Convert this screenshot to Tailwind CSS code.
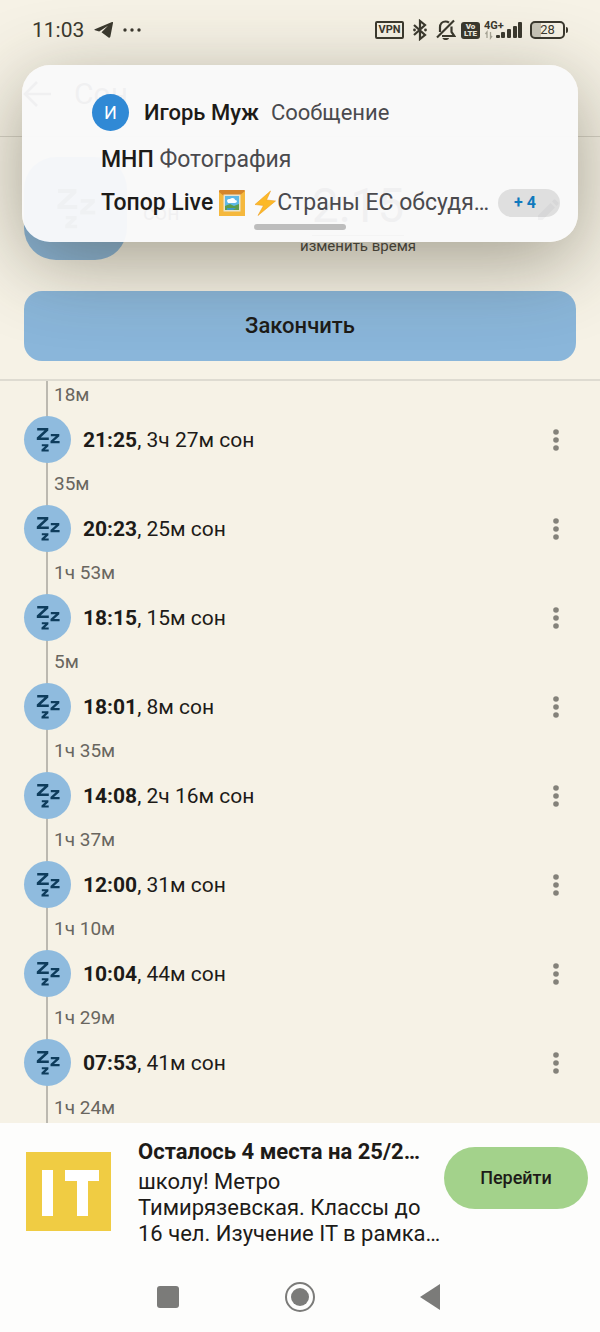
<!DOCTYPE html>
<html lang="ru">
<head>
<meta charset="utf-8">
<meta name="viewport" content="width=device-width, initial-scale=1">
<title>Сон</title>
<script src="https://cdn.jsdelivr.net/npm/@tailwindcss/browser@4"></script>
</head>
<body class="bg-[#f6f2e6] font-['Roboto',sans-serif] text-[#1d1b18]">
<svg class="hidden" aria-hidden="true">
  <symbol id="zzz" viewBox="0 0 24 24">
    <g fill="currentColor">
      <path d="M1.200 0H12.300V2.400L4.700 9.600H12.800V12H.8V9.600L8.500 2.400H1.200z"/>
      <path d="M14.800 6H23.300V8.200L18 13.100H23.600V15.300H14.500V13.100L19.800 8.200H14.800z"/>
      <path d="M5.800 16.200H12.400V18.200L8.900 21.400H12.700V23.500H5.500V21.400L9.100 18.200H5.800z"/>
    </g>
  </symbol>
  <symbol id="dots" viewBox="0 0 8 24">
    <g fill="currentColor"><circle cx="4" cy="4" r="2.800"/><circle cx="4" cy="12" r="2.800"/><circle cx="4" cy="20" r="2.800"/></g>
  </symbol>
</svg>
<div class="relative flex min-h-screen flex-col">

  <div class="flex h-15 items-center justify-between pr-8 pl-8 text-[#3b392f]">
    <div class="flex items-center">
      <span class="text-[21px] leading-6">11:03</span>
      <svg class="ml-2.5 h-4 w-5" viewBox="0 0 20 16"><path fill="currentColor" d="M18 0 L.8 7.200 Q-.2 7.900 1 8.300 L5.200 9.500 L14 3.800 L7.500 10.300 L14.500 15.400 Q16 16.300 16.400 14.600 L19 1 Q19.200 -.3 18 0 Z"/></svg>
      <svg class="ml-2 h-4 w-5" viewBox="0 0 20 16"><g fill="currentColor"><circle cx="3" cy="8" r="1.700"/><circle cx="10" cy="8" r="1.700"/><circle cx="17" cy="8" r="1.700"/></g></svg>
    </div>
    <div class="flex items-center">
      <span class="flex h-[18px] w-[29px] items-center justify-center rounded-xs border-2 border-[#3b392f] text-[11px] leading-3 font-bold">VPN</span>
      <svg class="ml-2 h-[22px] w-4" viewBox="0 0 16 22"><path fill="none" stroke="currentColor" stroke-width="2.200" d="M2 6l11 10-5 4V2l5 4L2 16"/><circle cx="2.500" cy="11" r="1.400" fill="currentColor"/><circle cx="13.500" cy="11" r="1.400" fill="currentColor"/></svg>
      <svg class="ml-2 h-[22px] w-5" viewBox="0 0 20 22"><g fill="none" stroke="currentColor" stroke-width="2.200"><path d="M1 18.500L18 1.500"/><path d="M4 13V8.500C4 4.500 6.500 2.500 9.500 2.500c1.500 0 2.500.4 3.500 1.200M15.500 7.500V13l2.800 4H6"/></g><path fill="currentColor" d="M6.500 19h6.500c-.5 2.800-6 2.800-6.500 0z"/></svg>
      <span class="ml-[5px] flex h-[17px] w-[19px] flex-col items-center justify-center rounded-[3px] bg-[#3b392f] text-[8px] leading-[7px] font-black text-[#f0ede0]"><span>Vo</span><span>LTE</span></span>
      <svg class="ml-1 h-5 w-[38px]" viewBox="0 0 38 20"><text x="0" y="9" font-size="11" font-weight="700" fill="currentColor">4G+</text><path d="M3 18V12l-1.500 2M6.500 12v6l1.500-2" fill="none" stroke="#aaa799" stroke-width="1.300"/><g fill="currentColor"><rect x="12" y="15" width="4" height="3" rx="1"/><rect x="17" y="12" width="4" height="6" rx="1"/><rect x="23" y="9" width="4" height="9" rx="1"/><rect x="29" y="6" width="4" height="12" rx="1"/><rect x="34" y="2" width="4" height="16" rx="1"/></g></svg>
      <span class="ml-2 flex h-[18px] w-[35px] items-center justify-center rounded-[5px] border-2 border-[#3b392f] bg-linear-to-r from-[#c9c6b9] from-30% to-transparent to-30% text-[13px] leading-4">28</span>
      <span class="ml-px h-1.5 w-0.5 rounded-r bg-[#3b392f]"></span>
    </div>
  </div>

  <header class="flex h-[77px] items-center border-b border-[#d6d2c6] pb-2 pl-[22px]">
    <button aria-label="Назад" class="text-[#1d1b18]"><svg class="h-8 w-8" viewBox="0 0 32 32"><path fill="none" stroke="currentColor" stroke-width="2.600" d="M29 16H4M15 4L3 16l12 12"/></svg></button>
    <h1 class="ml-5 text-[30px] leading-10">Сон</h1>
  </header>

  <section class="border-b-2 border-[#dedbd1] px-6 pt-5 pb-[18px]">
    <div class="flex h-[103px]">
      <div class="flex h-[103px] w-[103px] items-center justify-center rounded-[32px] bg-[#8ab5d9] text-[#0e3c5c]"><svg class="h-10 w-10"><use href="#zzz"/></svg></div>
      <span class="mt-9 ml-4 text-[22px] leading-10">сон</span>
      <div class="ml-auto flex w-[118px] flex-col items-center">
        <span class="mt-5 border-b border-[#77756d] text-[48px] leading-[58px]">2:15</span>
        <span class="text-[15px] leading-5 whitespace-nowrap text-[#45433c]">изменить время</span>
      </div>
      <button aria-label="Изменить" class="mr-[15px] ml-[120px] h-[103px]"><svg class="h-6 w-6" viewBox="0 0 24 24"><path fill="currentColor" d="M1 18.500V23h4.500L18 10.500 13.500 6zM21 7.500c.8-.8.800-1.500 0-2.300l-2.300-2.300c-.8-.8-1.500-.8-2.300 0L15 4.500 19.500 9z"/></svg></button>
    </div>
    <button class="mt-[31px] h-[70px] w-full rounded-[18px] bg-[#8ab6da] text-[22px] leading-7 font-medium">Закончить</button>
  </section>

  <main id="log" class="relative flex-1 pr-6 pl-6 before:absolute before:inset-y-0 before:left-[46px] before:w-0.5 before:bg-[#bcb9b0]">
    <div class="h-[35px] pl-[30px] text-[19px] leading-7 text-[#69665f]">18м</div>
  </main>
  <template id="row">
    <div class="relative flex h-[47px] items-center">
      <span class="flex h-[47px] w-[47px] items-center justify-center rounded-full bg-[#8fbbde] text-[#0e3c5c]"><svg class="h-6 w-6"><use href="#zzz"/></svg></span>
      <p class="ml-3 text-[21px] leading-7"><b class="font-bold"></b><span></span></p>
      <button aria-label="Действия" class="ml-auto flex h-10 w-10 items-center justify-center text-[#84827a]"><svg class="h-6 w-2"><use href="#dots"/></svg></button>
    </div>
    <div class="flex h-[42px] items-center pl-[30px] text-[19px] leading-7 text-[#69665f] last:h-[36px] last:items-end"></div>
  </template>

  <aside class="flex h-[127px] bg-[#fdfdfc] pt-3 pr-3 pl-[26px]">
    <svg class="mt-[17px] h-[79px] w-[85px] shrink-0" viewBox="0 0 85 79" role="img" aria-label="IT"><rect width="85" height="79" fill="#f0cc43"/><path fill="#fff" d="M16 18h11v46H16zM39 18h34v11H62v35H51V29H39z"/></svg>
    <div class="ml-[27px] min-w-0 flex-1">
      <h2 class="text-[22px] leading-[34px] font-bold whitespace-nowrap">Осталось 4 места на 25/2…</h2>
      <p class="text-[22px] leading-[26px] whitespace-nowrap">школу! Метро<br>Тимирязевская. Классы до<br>16 чел. Изучение IT в рамка…</p>
    </div>
    <button class="mt-3 ml-2 h-[62px] w-36 shrink-0 rounded-full bg-[#a3d28b] text-[18px] leading-6 font-medium">Перейти</button>
  </aside>

  <nav class="flex h-[82px] items-center justify-center gap-[100px] bg-[#fdfdfc] pt-3 text-[#7b7b79]">
    <button aria-label="Недавние"><svg class="h-8 w-8" viewBox="0 0 32 32"><rect x="5" y="5" width="22" height="22" rx="3" fill="currentColor"/></svg></button>
    <button aria-label="Домой"><svg class="h-8 w-8" viewBox="0 0 32 32"><circle cx="16" cy="16" r="14" fill="none" stroke="currentColor" stroke-width="2"/><circle cx="16" cy="16" r="9" fill="currentColor"/></svg></button>
    <button aria-label="Назад"><svg class="h-8 w-8" viewBox="0 0 32 32"><path fill="currentColor" d="M24 3v26L4 16z"/></svg></button>
  </nav>

  <div class="absolute inset-x-[22px] top-[65px] h-[177px] rounded-[28px] bg-[#f9f9fa]/96 shadow-[0_20px_80px_rgba(60,55,35,0.44)]">
    <div class="mt-[29px] ml-[70px] flex h-[37px] items-center">
      <span class="flex h-[37px] w-[37px] items-center justify-center rounded-full bg-[#3089d5] text-[18px] leading-6 text-white">И</span>
      <span class="ml-[15px] text-[22px] leading-7 font-medium">Игорь Муж</span>
      <span class="ml-3 text-[22px] leading-7 text-[#4a4a4e]">Сообщение</span>
    </div>
    <p class="mt-[15px] ml-[79px] text-[23px] leading-7 text-[#4a4a4e]"><span class="font-medium text-[#1d1b18]">МНП</span> Фотография</p>
    <div class="mt-[13px] mr-[18px] ml-[79px] flex h-8 items-center text-[23px] leading-8 text-[#4a4a4e]">
      <span class="font-medium whitespace-nowrap text-[#1d1b18]">Топор Live</span>
      <svg class="ml-1.5 h-[26px] w-[26px] shrink-0" viewBox="0 0 26 26"><rect width="26" height="26" rx="1" fill="#d5852b"/><path fill="#f5b83d" d="M0 26V2l5 4v15h16V5l5-4v25z"/><rect x="4.500" y="4.500" width="17" height="17" fill="#e9e4cf"/><rect x="6" y="6" width="14" height="14" fill="#5fb8e6"/><path fill="#fff" d="M8 11c0-2 2-2 3-2 2-2 5-1 5 1 3 0 2 3 0 3H9z"/><path fill="#5e9c4b" d="M6 16l5-2 4 2 5-2v6H6z"/><path fill="#3d9ac7" d="M8 18h9l-3 2H8z"/></svg>
      <svg class="ml-2 h-[26px] w-6 shrink-0" viewBox="0 0 24 26"><path fill="#fcb928" stroke="#ef9f22" stroke-width=".6" d="M17.500 1L2 14.500l8.500 1L5 25.500 22.500 11l-9-1z"/></svg>
      <span class="min-w-0 flex-1 whitespace-nowrap">Страны ЕС обсудя…</span>
      <span class="flex h-7 w-[62px] shrink-0 items-center justify-center rounded-full bg-black/10 pr-2 text-[16px] leading-5 font-bold text-[#1079bd]">+ 4</span>
    </div>
    <div class="mx-auto mt-[5px] h-1.5 w-[92px] rounded-full bg-[#bdbdbd]"></div>
  </div>
</div>
<script>
  const entries = [
    ['21:25', '3ч 27м', '35м'], ['20:23', '25м', '1ч 53м'], ['18:15', '15м', '5м'], ['18:01', '8м', '1ч 35м'],
    ['14:08', '2ч 16м', '1ч 37м'], ['12:00', '31м', '1ч 10м'], ['10:04', '44м', '1ч 29м'], ['07:53', '41м', '1ч 24м']
  ];
  const log = document.getElementById('log');
  for (const [time, length, gap] of entries) {
    const row = document.getElementById('row').content.cloneNode(true);
    row.querySelector('b').textContent = time;
    row.querySelector('p span').textContent = `, ${length} сон`;
    row.lastElementChild.textContent = gap;
    log.append(row);
  }
</script>
</body>
</html>
